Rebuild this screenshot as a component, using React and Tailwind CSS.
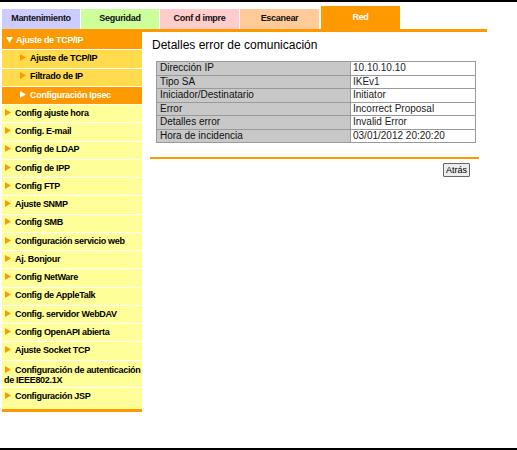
import React from "react";

function Arrow({ white }) {
  return (
    <svg width="6" height="7" viewBox="0 0 6 7" className="inline-block align-[0px] mr-[4px]">
      <polygon points="0,0 6,3.5 0,7" fill={white ? "#ffffff" : "#ff9900"} />
    </svg>
  );
}

function Down() {
  return (
    <svg width="7" height="6" viewBox="0 0 7 6" className="inline-block align-[0px] mr-[3px]">
      <polygon points="0,0 7,0 3.5,6" fill="#ffffff" />
    </svg>
  );
}

const items = [
  "Config ajuste hora",
  "Config. E-mail",
  "Config de LDAP",
  "Config de IPP",
  "Config FTP",
  "Ajuste SNMP",
  "Config SMB",
  "Configuración servicio web",
  "Aj. Bonjour",
  "Config NetWare",
  "Config de AppleTalk",
  "Config. servidor WebDAV",
  "Config OpenAPI abierta",
  "Ajuste Socket TCP",
];

const rows = [
  ["Dirección IP", "10.10.10.10"],
  ["Tipo SA", "IKEv1"],
  ["Iniciador/Destinatario", "Initiator"],
  ["Error", "Incorrect Proposal"],
  ["Detalles error", "Invalid Error"],
  ["Hora de incidencia", "03/01/2012 20:20:20"],
];

export default function App() {
  return (
    <div className="w-[517px] h-[450px] bg-white border-t-2 border-b-2 border-black overflow-hidden font-['Liberation_Sans',Arial,sans-serif] text-black">
      {/* Tabs */}
      <div className="flex items-end pl-[2px] pt-[4px] gap-[1px] h-[27px] text-[9px] font-bold tracking-[-0.3px]">
        <div className="w-[78px] h-[20px] bg-[#ccccff] flex items-center justify-center text-[#111]">Mantenimiento</div>
        <div className="w-[78px] h-[20px] bg-[#ccff99] flex items-center justify-center text-[#111]">Seguridad</div>
        <div className="w-[79px] h-[20px] bg-[#ffcccc] flex items-center justify-center text-[#111]">Conf d impre</div>
        <div className="w-[79px] h-[20px] bg-[#ffcc99] flex items-center justify-center text-[#111]">Escanear</div>
        <div className="ml-[1px] w-[79px] h-[23px] bg-[#ff9900] flex items-center justify-center text-white">Red</div>
      </div>
      <div className="ml-[2px] w-[485px] h-[3px] bg-[#ff9900]" />

      <div className="flex">
        {/* Sidebar */}
        <div className="ml-[2px] w-[140px] flex flex-col text-[9px] font-bold tracking-[-0.3px]">
          <div className="h-[18.25px] bg-[#ff9900] border-b border-white pl-[4px] text-white flex items-center">
            <span><Down />Ajuste de TCP/IP</span>
          </div>
          <div className="h-[18.25px] bg-[#ffdb4d] border-b border-white pl-[18px] flex items-center">
            <span><Arrow />Ajuste de TCP/IP</span>
          </div>
          <div className="h-[18.25px] bg-[#ffdb4d] border-b border-white pl-[18px] flex items-center">
            <span><Arrow />Filtrado de IP</span>
          </div>
          <div className="h-[18.25px] bg-[#ff9900] border-b border-white pl-[18px] text-white flex items-center">
            <span><Arrow white />Configuración Ipsec</span>
          </div>
          {items.map((t) => (
            <div key={t} className="h-[18.25px] bg-[#ffff99] border-b border-white pl-[3px] flex items-center">
              <span><Arrow />{t}</span>
            </div>
          ))}
          <div className="h-[27.5px] bg-[#ffff99] border-b border-white pl-[2px] pt-[4px] leading-[10px]">
            <span className="pl-[1px]"><Arrow />Configuración de autenticación</span>
            <br />
            <span>de IEEE802.1X</span>
          </div>
          <div className="h-[18.25px] bg-[#ffff99] pl-[3px] flex items-center">
            <span><Arrow />Configuración JSP</span>
          </div>
          <div className="h-[3px] bg-[#ffff99]" />
          <div className="h-[3px] bg-[#ff9900]" />
        </div>

        {/* Main */}
        <div className="flex-1 flex flex-col">
          <div className="pl-[10px] pt-[6px] text-[12px] leading-[14px]">Detalles error de comunicación</div>
          <table className="ml-[14px] mt-[9px] w-[320px] border-collapse text-[10px] leading-[12px] border border-[#8c8c8c]">
            <tbody>
              {rows.map(([a, b]) => (
                <tr key={a} className="h-[13.5px]">
                  <td className="w-[194px] bg-[#c8c8c8] border border-[#9a9a9a] px-[3px] py-0 text-[#111]">{a}</td>
                  <td className="bg-white border border-[#9a9a9a] px-[2px] py-0 text-[#222]">{b}</td>
                </tr>
              ))}
            </tbody>
          </table>
          <div className="ml-[8px] mt-[14px] w-[329px] h-[2px] bg-[#ff9900]" />
          <div className="ml-[8px] w-[329px] flex justify-end pr-[9px] mt-[4px]">
            <button className="h-[14px] px-[2px] bg-[#ececec] border border-[#666] text-[9px] leading-[12px] text-black rounded-[1px]">Atrás</button>
          </div>
        </div>
      </div>
    </div>
  );
}
